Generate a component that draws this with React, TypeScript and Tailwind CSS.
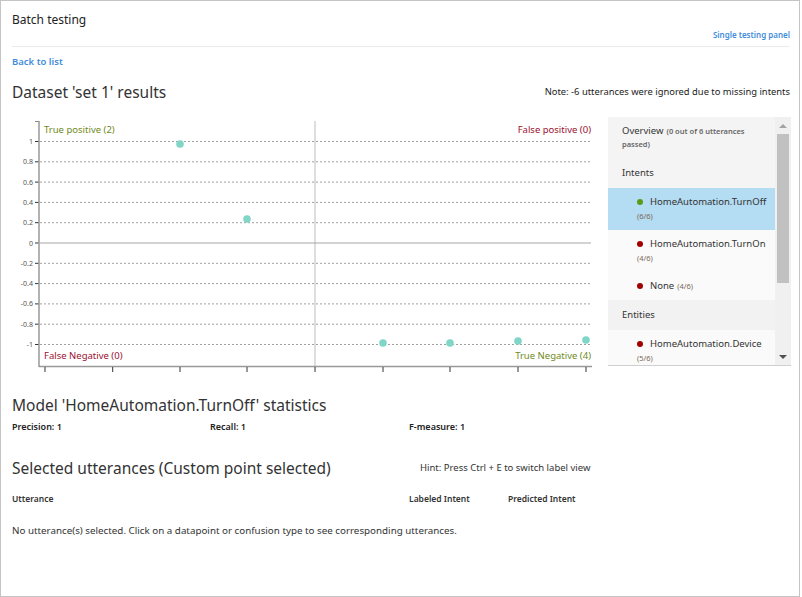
const FONT = "font-['Noto_Sans','Open_Sans',sans-serif]";

const gridValues = [1, 0.8, 0.6, 0.4, 0.2, 0, -0.2, -0.4, -0.6, -0.8, -1];
const xTicks = [33, 100.7, 168, 235, 303, 371, 438, 506, 574];
const points = [
  [168, 28],
  [235, 103],
  [371, 227],
  [438, 227],
  [506, 225],
  [574, 224],
];

const yOf = (v: number) => 127 - v * 101.5;

function Chart() {
  return (
    <svg width="588" height="256" className="block shrink-0" style={{ fontFamily: "'Noto Sans', 'Open Sans', sans-serif" }}>
      {/* quadrant divider */}
      <line x1="303" y1="5" x2="303" y2="250" stroke="#dedede" strokeWidth="2" />
      {gridValues.map((v) => (
        <g key={v}>
          <line
            x1="28"
            x2="579"
            y1={yOf(v)}
            y2={yOf(v)}
            stroke={v === 0 ? "#a6a6a6" : "#a0a0a0"}
            strokeWidth="1"
            strokeDasharray={v === 0 ? undefined : "2 2"}
          />
          <line x1="23" x2="27" y1={yOf(v)} y2={yOf(v)} stroke="#333" strokeWidth="1" />
          <text x="21" y={yOf(v) + 2.5} textAnchor="end" fontSize="7" fill="#555">
            {v}
          </text>
        </g>
      ))}
      {/* axes */}
      <line x1="23" y1="5.5" x2="27" y2="5.5" stroke="#888" strokeWidth="1" />
      <line x1="27" y1="5" x2="27" y2="251" stroke="#999" strokeWidth="1.5" />
      <line x1="27" y1="250.5" x2="580" y2="250.5" stroke="#999" strokeWidth="1.5" />
      {xTicks.map((x) => (
        <line key={x} x1={x} x2={x} y1="251" y2="256" stroke="#333" strokeWidth="1" />
      ))}
      {points.map(([x, y]) => (
        <circle key={`${x}-${y}`} cx={x} cy={y} r="3.8" fill="#7fd6c6" />
      ))}
      <text x="32" y="17" fontSize="9.5" fill="#6f8a22">True positive (2)</text>
      <text x="579" y="17" fontSize="9.5" fill="#9b1030" textAnchor="end">False positive (0)</text>
      <text x="32" y="243" fontSize="9.5" fill="#9b1030">False Negative (0)</text>
      <text x="579" y="243" fontSize="9.5" fill="#6f8a22" textAnchor="end">True Negative (4)</text>
    </svg>
  );
}

interface Item {
  name: string;
  count: string;
  ok: boolean;
  wrap: boolean;
  selected?: boolean;
}

function ListItem({ item }: { item: Item }) {
  return (
    <div className={`pl-[29px] pr-1 py-[7px] ${item.selected ? "bg-[#b4dcf2]" : "bg-[#fafafa]"}`}>
      <div className="flex h-[14px] items-center text-[9.5px] leading-[14px] text-[#333]">
        <span className={`mr-[7px] inline-block h-[6px] w-[6px] shrink-0 rounded-full ${item.ok ? "bg-[#5a9a18]" : "bg-[#a10000]"}`} />
        <span>{item.name}</span>
        {!item.wrap && <span className="ml-[3px] text-[7.5px] text-[#7a6a5a]">{item.count}</span>}
      </div>
      {item.wrap && <div className="text-[7.5px] leading-[14px] text-[#7a6a5a]">{item.count}</div>}
    </div>
  );
}

function SidePanel() {
  const intents: Item[] = [
    { name: "HomeAutomation.TurnOff", count: "(6/6)", ok: true, wrap: true, selected: true },
    { name: "HomeAutomation.TurnOn", count: "(4/6)", ok: false, wrap: true },
    { name: "None", count: "(4/6)", ok: false, wrap: false },
  ];
  return (
    <div className="mt-[1px] flex h-[249px] w-[183px] shrink-0 border-b border-[#cfcfcf] bg-[#f4f4f4]">
      <div className="flex-1 overflow-hidden">
        <div className="pl-[14px] pr-2 pt-[7px] pb-[8px] text-[#333]">
          <div className="flex h-[14px] items-baseline leading-[14px]">
            <span className="text-[9.5px]">Overview</span>
            <span className="ml-[3px] text-[7.5px] font-semibold text-[#666]">(0 out of 6 utterances</span>
          </div>
          <div className="h-[12px] text-[7.5px] font-semibold leading-[12px] text-[#666]">passed)</div>
        </div>
        <div className="h-[30px] pl-[14px] pt-[8px] text-[9.5px] leading-[14px] text-[#333]">Intents</div>
        {intents.map((it) => (
          <ListItem key={it.name} item={it} />
        ))}
        <div className="h-[30px] bg-[#f2f2f2] pl-[14px] pt-[8px] text-[9.5px] leading-[14px] text-[#333]">Entities</div>
        <ListItem item={{ name: "HomeAutomation.Device", count: "(5/6)", ok: false, wrap: true }} />
      </div>
      <div className="flex w-[16px] flex-col items-center bg-[#f0f0f0]">
        <div className="flex h-[17px] items-center justify-center">
          <span className="h-0 w-0 border-x-[4px] border-b-[4px] border-x-transparent border-b-[#a3a3a3]" />
        </div>
        <div className="h-[149px] w-[12px] bg-[#c1c1c1]" />
        <div className="flex-1" />
        <div className="flex h-[17px] items-center justify-center">
          <span className="h-0 w-0 border-x-[4px] border-t-[4px] border-x-transparent border-t-[#505050]" />
        </div>
      </div>
    </div>
  );
}

export default function App() {
  return (
    <div className={`h-[597px] w-[800px] border border-[#c4c4c4] bg-white pl-[11px] pr-[9px] ${FONT}`}>
      <header className="flex h-[46px] justify-between border-b border-[#ececec]">
        <h1 className="pt-[11px] text-[12px] leading-[16px] text-[#222]">Batch testing</h1>
        <a className="self-end pb-[5px] text-[8px] font-semibold leading-[12px] text-[#3f8ddb]">Single testing panel</a>
      </header>

      <a className="mt-[8px] block text-[9.5px] font-semibold leading-[14px] text-[#3f8ddb]">Back to list</a>

      <div className="mt-[13px] flex items-center justify-between">
        <h2 className="text-[15.5px] leading-[20px] text-[#333]">Dataset 'set 1' results</h2>
        <p className="text-[9.4px] leading-[14px] text-[#222]">Note: -6 utterances were ignored due to missing intents</p>
      </div>

      <div className="mt-[14px] flex gap-[8px]">
        <Chart />
        <SidePanel />
      </div>

      <h2 className="mt-[23px] text-[15.5px] leading-[20px] text-[#333]">Model 'HomeAutomation.TurnOff' statistics</h2>
      <div className="mt-[5px] grid grid-cols-[198px_199px_1fr] text-[9px] font-semibold leading-[14px] text-[#222]">
        <span>Precision: 1</span>
        <span>Recall: 1</span>
        <span>F-measure: 1</span>
      </div>

      <div className="mt-[24px] flex items-center">
        <h2 className="w-[408px] text-[15.5px] leading-[20px] text-[#333]">Selected utterances (Custom point selected)</h2>
        <p className="text-[9.5px] leading-[14px] text-[#333]">Hint: Press Ctrl + E to switch label view</p>
      </div>

      <div className="mt-[14px] grid grid-cols-[397px_99px_1fr] text-[8.5px] font-semibold leading-[14px] text-[#333]">
        <span>Utterance</span>
        <span>Labeled Intent</span>
        <span>Predicted Intent</span>
      </div>

      <p className="mt-[18px] text-[9.8px] leading-[14px] text-[#333]">
        No utterance(s) selected. Click on a datapoint or confusion type to see corresponding utterances.
      </p>
    </div>
  );
}
